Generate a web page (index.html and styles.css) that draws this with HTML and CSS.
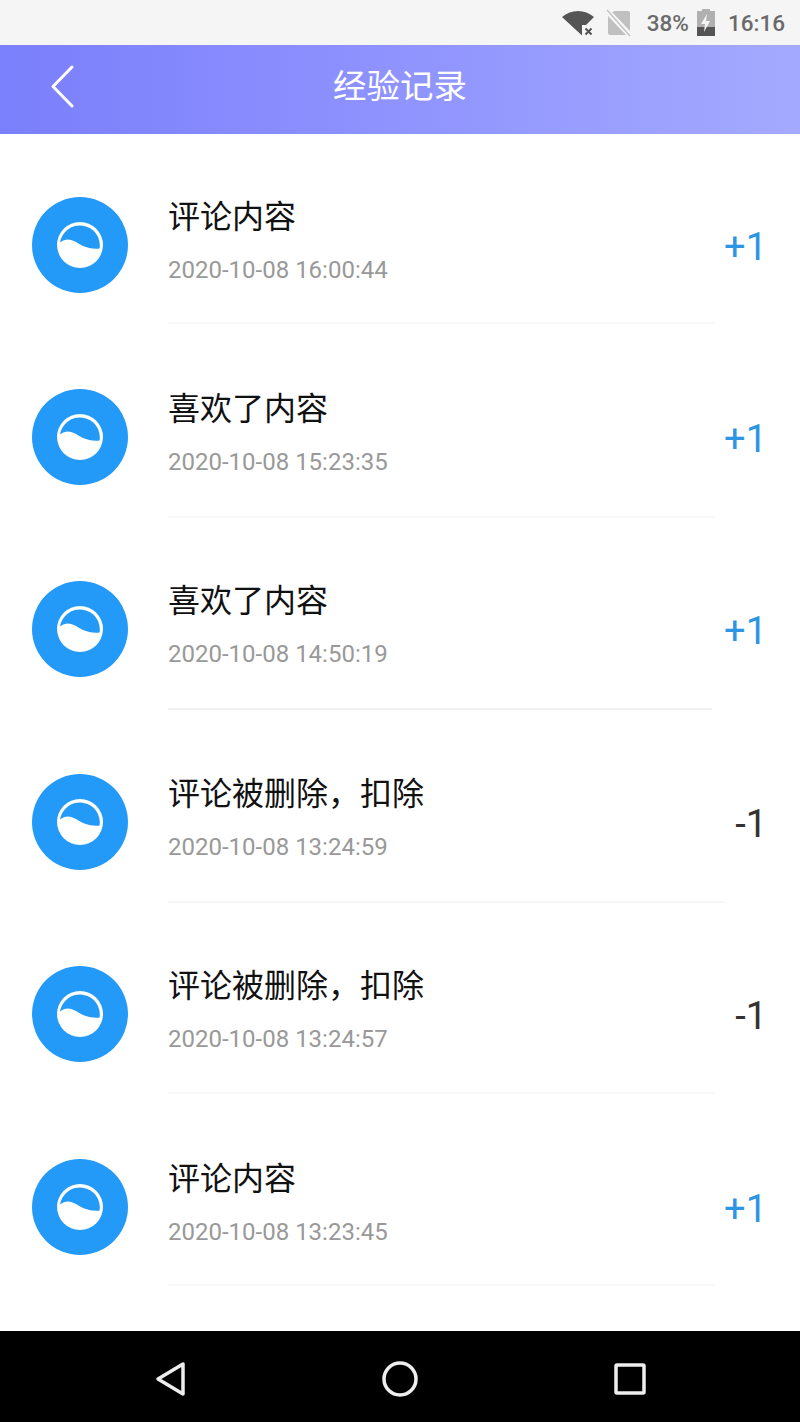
FILE: index.html
```html
<!DOCTYPE html>
<html>
	<head>
		<meta charset="UTF-8">
		<title>经验记录</title>
		<link rel="stylesheet" href="styles.css">
	</head>
	<body>
		<svg class="defs" width="0" height="0">
			<symbol id="logo" viewBox="0 0 96 96">
				<circle cx="48" cy="48" r="48" fill="#2399f8"/>
				<circle cx="48" cy="48" r="23" fill="#fff"/>
				<path d="M28 45.500C33 41.500 38 41.500 44 45C50 49 58 52.500 67.600 51.500A20 20 0 1 0 28 45.500Z" fill="#2399f8"/>
			</symbol>
		</svg>
		<div class="status-bar">
			<svg class="st-wifi" width="34" height="28" viewBox="0 0 34 28">
				<path d="M1 8C10 0 24 0 33 8L25 16H21V26.500Z" fill="#555"/>
				<path d="M24.500 19.500L30.500 25.500M30.500 19.500L24.500 25.500" stroke="#555" stroke-width="2"/>
			</svg>
			<svg class="st-sim" width="26" height="28" viewBox="0 0 26 28">
				<path d="M9 2H22Q24 2 24 4V22L6 3ZM2 7V24Q2 26 4 26H20Z" fill="#c0c0c0"/>
				<path d="M1 1L24 27" stroke="#c0c0c0" stroke-width="1.200"/>
			</svg>
			<span class="st-pct">38%</span>
			<svg class="st-batt" width="18" height="28" viewBox="0 0 18 28">
				<path d="M5 0H13V2H18V27H0V2H5Z" fill="#b0b0b0"/>
				<path d="M0 18H18V27H0Z" fill="#555"/>
				<path d="M10 5L4 15H8L7 23L13 12H9Z" fill="#f5f5f5"/>
			</svg>
			<span class="st-time">16:16</span>
		</div>
		<div class="header">
			<svg class="back" width="26" height="44" viewBox="0 0 26 44">
				<path d="M22 2L3 21.500L22 41" fill="none" stroke="#fff" stroke-width="3" stroke-linecap="round" stroke-linejoin="round"/>
			</svg>
			<h1>经验记录</h1>
		</div>
		<ul class="list">
			<li class="item">
				<svg class="logo"><use href="#logo"/></svg>
				<div class="info">
					<div class="name">评论内容</div>
					<div class="time">2020-10-08 16:00:44</div>
				</div>
				<div class="num plus">+1</div>
			</li>
			<li class="item">
				<svg class="logo"><use href="#logo"/></svg>
				<div class="info">
					<div class="name">喜欢了内容</div>
					<div class="time">2020-10-08 15:23:35</div>
				</div>
				<div class="num plus">+1</div>
			</li>
			<li class="item">
				<svg class="logo"><use href="#logo"/></svg>
				<div class="info">
					<div class="name">喜欢了内容</div>
					<div class="time">2020-10-08 14:50:19</div>
				</div>
				<div class="num plus">+1</div>
			</li>
			<li class="item">
				<svg class="logo"><use href="#logo"/></svg>
				<div class="info">
					<div class="name">评论被删除，扣除</div>
					<div class="time">2020-10-08 13:24:59</div>
				</div>
				<div class="num">-1</div>
			</li>
			<li class="item">
				<svg class="logo"><use href="#logo"/></svg>
				<div class="info">
					<div class="name">评论被删除，扣除</div>
					<div class="time">2020-10-08 13:24:57</div>
				</div>
				<div class="num">-1</div>
			</li>
			<li class="item">
				<svg class="logo"><use href="#logo"/></svg>
				<div class="info">
					<div class="name">评论内容</div>
					<div class="time">2020-10-08 13:23:45</div>
				</div>
				<div class="num plus">+1</div>
			</li>
		</ul>
		<div class="nav-bar">
			<svg width="60" height="40" viewBox="0 0 60 40">
				<path d="M18 20L43 5V35Z" fill="none" stroke="#eee" stroke-width="3.500" stroke-linejoin="round"/>
			</svg>
			<svg width="60" height="40" viewBox="0 0 60 40">
				<circle cx="30" cy="20" r="16" fill="none" stroke="#eee" stroke-width="3.500"/>
			</svg>
			<svg width="60" height="40" viewBox="0 0 60 40">
				<rect x="16" y="6" width="28" height="28" rx="1" fill="none" stroke="#eee" stroke-width="3.500"/>
			</svg>
		</div>
	</body>
</html>
```

FILE: styles.css
```css
*{
	padding: 0;
	margin: 0;
	box-sizing: border-box;
}
li{
	list-style: none;
}
body{
	width: 800px;
	height: 1422px;
	display: flex;
	flex-direction: column;
	overflow: hidden;
	background-color: #fff;
	font-family: Roboto, "Noto Sans CJK SC", sans-serif;
}
.defs{
	position: absolute;
}
.status-bar{
	height: 45px;
	flex: none;
	display: flex;
	align-items: center;
	justify-content: flex-end;
	padding-right: 15px;
	background-color: #f5f5f5;
	color: #6a6a6a;
	font-size: 22.500px;
	font-weight: 500;
}
.st-wifi{
	margin-right: 11px;
}
.st-sim{
	margin-right: 15px;
}
.st-pct{
	margin-right: 8px;
}
.st-batt{
	margin-right: 13px;
}
.header{
	height: 89px;
	flex: none;
	display: grid;
	grid-template-columns: 1fr auto 1fr;
	align-items: center;
	padding: 0 50px 6px;
	background: linear-gradient(90deg, #7a7ffb 0%, #8b8ffe 40%, #a3aafe 100%);
}
.header h1{
	font-size: 33.500px;
	font-weight: 400;
	color: #fff;
	line-height: 1;
}
.list{
	flex: 1;
	overflow: hidden;
}
.item{
	height: 192.400px;
	padding-left: 32px;
	padding-top: 63px;
	display: flex;
	align-items: flex-start;
	position: relative;
}
.item:first-child{
	height: 190px;
}
.item + .item{
	padding-top: 65px;
}
/* hairline under the text column */
.item::after{
	content: "";
	position: absolute;
	left: 168px;
	right: 85px;
	bottom: 0;
	height: 2px;
	background-color: #f8f8f8;
}
.item:nth-child(2)::after{
	bottom: -2px;
}
.item:nth-child(3)::after{
	right: 88px;
	bottom: -1px;
	background-color: #f1f1f1;
}
.item:nth-child(4)::after{
	right: 76px;
	bottom: -2px;
	background-color: #f5f5f5;
}
.logo{
	width: 96px;
	height: 96px;
	flex: none;
}
.info{
	flex: 1;
	margin-left: 40px;
}
.name{
	font-size: 32px;
	line-height: 40px;
	color: #111;
}
.time{
	margin-top: 18px;
	font-size: 24px;
	line-height: 30px;
	color: #999;
}
.num{
	margin-top: 28px;
	margin-right: 33px;
	font-size: 38px;
	line-height: 44px;
	color: #333;
}
.num.plus{
	color: #2e94e4;
}
.nav-bar{
	height: 91px;
	flex: none;
	display: flex;
	align-items: center;
	justify-content: space-between;
	padding: 4px 140px 0;
	background-color: #000;
}
```
